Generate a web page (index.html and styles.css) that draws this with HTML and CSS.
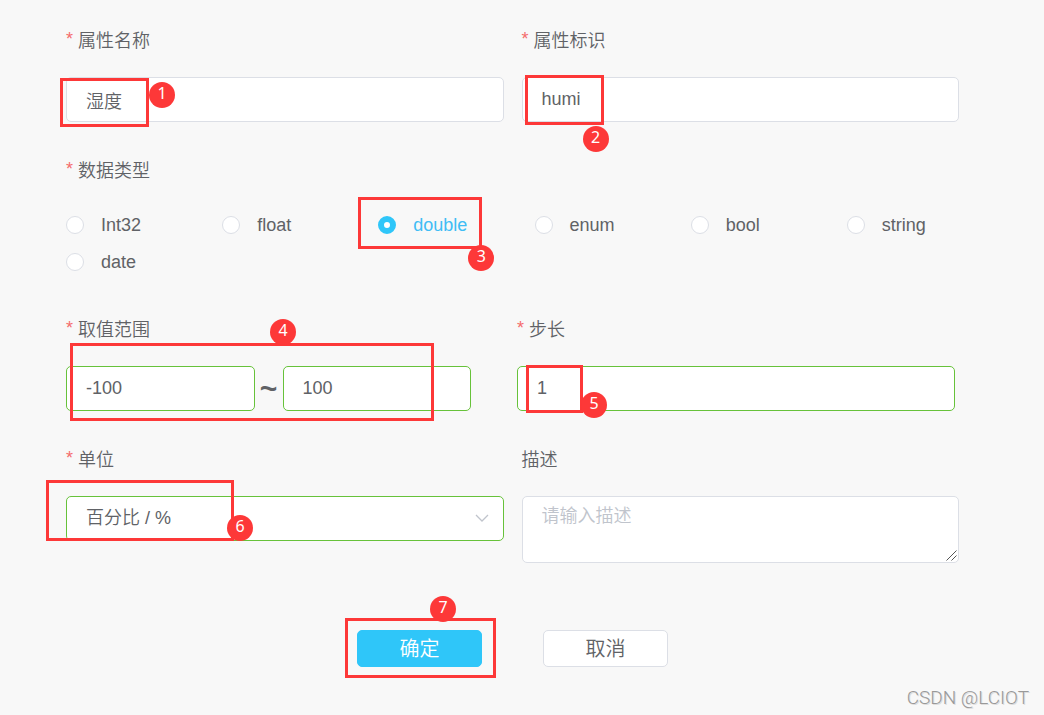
FILE: index.html
```html
<!DOCTYPE html>
<html lang="zh-CN">
<head>
    <meta charset="UTF-8">
    <title>添加属性</title>
    <link rel="stylesheet" href="styles.css">
</head>
<body>

<form class="form">
    <div class="row">
        <div class="item">
            <label class="label required" for="name">属性名称</label>
            <div class="field">
                <input class="input" id="name" type="text" value="湿度">
                <span class="frame frame-name"></span>
                <span class="badge badge-name">1</span>
            </div>
        </div>
        <div class="item">
            <label class="label required" for="key">属性标识</label>
            <div class="field">
                <input class="input" id="key" type="text" value="humi">
                <span class="frame frame-key"></span>
                <span class="badge badge-key">2</span>
            </div>
        </div>
    </div>

    <fieldset class="item types">
        <legend class="label required">数据类型</legend>
        <div class="radios">
            <label class="radio"><input type="radio" name="type">Int32</label>
            <label class="radio"><input type="radio" name="type">float</label>
            <label class="radio">
                <input type="radio" name="type" checked>double
                <span class="frame frame-type"></span>
                <span class="badge badge-type">3</span>
            </label>
            <label class="radio"><input type="radio" name="type">enum</label>
            <label class="radio"><input type="radio" name="type">bool</label>
            <label class="radio"><input type="radio" name="type">string</label>
            <label class="radio"><input type="radio" name="type">date</label>
        </div>
    </fieldset>

    <div class="row row-range">
        <div class="item">
            <label class="label required" for="min">取值范围</label>
            <div class="field range">
                <input class="input valid" id="min" type="text" value="-100">
                <span class="tilde">~</span>
                <input class="input valid" type="text" value="100" aria-label="最大值">
                <span class="frame frame-range"></span>
                <span class="badge badge-range">4</span>
            </div>
        </div>
        <div class="item">
            <label class="label required" for="step">步长</label>
            <div class="field">
                <input class="input valid" id="step" type="text" value="1">
                <span class="frame frame-step"></span>
                <span class="badge badge-step">5</span>
            </div>
        </div>
    </div>

    <div class="row">
        <div class="item">
            <label class="label required" for="unit">单位</label>
            <div class="field">
                <select class="input valid" id="unit">
                    <option>百分比 / %</option>
                </select>
                <svg class="arrow" width="14" height="8" viewBox="0 0 14 8">
                    <path d="M1 1l6 6 6-6" fill="none" stroke="#c0c4cc" stroke-width="1.3"/>
                </svg>
                <span class="frame frame-unit"></span>
                <span class="badge badge-unit">6</span>
            </div>
        </div>
        <div class="item">
            <label class="label" for="desc">描述</label>
            <div class="field">
                <textarea class="input" id="desc" placeholder="请输入描述"></textarea>
                <svg class="grip" width="11" height="11" viewBox="0 0 11 11">
                    <path d="M.5 10.5l10-10M5.5 10.5l5-5" fill="none" stroke="#555"/>
                </svg>
            </div>
        </div>
    </div>

    <div class="buttons">
        <div class="field">
            <button class="btn primary" type="button">确定</button>
            <span class="frame frame-ok"></span>
            <span class="badge badge-ok">7</span>
        </div>
        <button class="btn" type="button">取消</button>
    </div>
</form>

<footer class="watermark">CSDN @LCIOT</footer>

</body>
</html>
```
FILE: styles.css
```css
* {
    box-sizing: border-box;
}

body {
    margin: 0;
    background: #f8f8f8;
    color: #606266;
    font-family: "Liberation Sans", "Noto Sans CJK SC", sans-serif;
    font-size: 18px;
    font-weight: 350;
    line-height: 24px;
}

.form {
    padding: 29px 85px 0 66px;
}

.row {
    display: grid;
    grid-template-columns: 1fr 1fr;
    gap: 18px;
}

.row-range {
    grid-template-columns: 405fr 438fr;
    gap: 46px;
    margin-right: 4px;
}

.item {
    min-width: 0;
    margin-bottom: 37px;
}

.label {
    display: block;
    height: 24px;
    margin-bottom: 24px;
    padding: 0;
}

.required::before {
    content: "*";
    margin-right: 5px;
    color: #f56c6c;
    line-height: 1;
    vertical-align: 2px;
}

.field {
    position: relative;
}

.input {
    display: block;
    width: 100%;
    height: 45px;
    margin: 0;
    padding: 0 19px;
    border: 1px solid #dcdfe6;
    border-radius: 5px;
    outline: none;
    background: #fff;
    color: #606266;
    font: inherit;
    line-height: 43px;
    appearance: none;
}

.input.valid {
    border-color: #67c23a;
}

textarea.input {
    height: 67px;
    padding: 7px 19px;
    line-height: 24px;
    resize: vertical;
}

textarea.input::-webkit-resizer {
    background: transparent;
}

.input::placeholder {
    color: #c0c4cc;
}

/* data type */
.types {
    margin: 0 0 38px;
    padding: 0;
    border: 0;
}

.types .label {
    margin-bottom: 23px;
}

.radios {
    display: grid;
    grid-template-columns: repeat(6, 1fr);
    margin-right: -44px;
}

.radio {
    position: relative;
    display: flex;
    align-items: center;
    gap: 17px;
    height: 37px;
}

.radio input {
    width: 18px;
    height: 18px;
    margin: 0;
    border: 1px solid #dcdfe6;
    border-radius: 50%;
    background: #fff;
    appearance: none;
}

.radio input:checked {
    border: 6px solid #2fc6f9;
}

.radio:has(:checked) {
    color: #40bdf5;
}

/* range */
.range {
    display: flex;
}

.range .input {
    flex: 1;
    min-width: 0;
}

.tilde {
    width: 28px;
    font-size: 30px;
    font-weight: bold;
    line-height: 45px;
    text-align: center;
}

.arrow {
    position: absolute;
    top: 18px;
    right: 15px;
    pointer-events: none;
}

.grip {
    position: absolute;
    right: 2px;
    bottom: 2px;
    pointer-events: none;
}

/* buttons */
.buttons {
    display: flex;
    justify-content: center;
    gap: 61px;
    margin-top: 30px;
}

.btn {
    display: block;
    width: 125px;
    height: 37px;
    padding: 0;
    border: 1px solid #dcdfe6;
    border-radius: 5px;
    background: #fff;
    color: #606266;
    font: inherit;
    font-size: 20px;
}

.btn.primary {
    border-color: #2fc6f9;
    background: #2fc6f9;
    color: #fff;
}

/* numbered marks over the fields */
.frame {
    position: absolute;
    border: 3px solid #fd3838;
    pointer-events: none;
}

.badge {
    position: absolute;
    width: 26px;
    height: 26px;
    border-radius: 50%;
    background: #fd3838;
    color: #fff;
    font-family: "Noto Sans", sans-serif;
    font-size: 16px;
    font-weight: 400;
    line-height: 22px;
    text-align: center;
    pointer-events: none;
}

.frame-name {
    top: 1px;
    left: -6px;
    width: 89px;
    height: 49px;
}

.badge-name {
    top: 5px;
    left: 83px;
}

.frame-key {
    top: -2px;
    left: 3px;
    width: 79px;
    height: 50px;
}

.badge-key {
    top: 49px;
    left: 61px;
}

.frame-type {
    top: -9px;
    left: -20px;
    width: 124px;
    height: 52px;
}

.badge-type {
    top: 39px;
    left: 90px;
}

.frame-range {
    top: -23px;
    left: 4px;
    width: 364px;
    height: 78px;
}

.badge-range {
    top: -47px;
    left: 204px;
}

.frame-step {
    top: -1px;
    left: 9px;
    width: 57px;
    height: 48px;
}

.badge-step {
    top: 26px;
    left: 64px;
}

.frame-unit {
    top: -16px;
    left: -20px;
    width: 188px;
    height: 61px;
}

.badge-unit {
    top: 19px;
    left: 161px;
}

.frame-ok {
    top: -12px;
    left: -12px;
    width: 151px;
    height: 60px;
}

.badge-ok {
    top: -34px;
    left: 73px;
}

.watermark {
    margin-top: 19px;
    padding-right: 15px;
    color: #999;
    font-family: Roboto, sans-serif;
    font-size: 19px;
    text-align: right;
    text-shadow: 1px 1px 0 #ddd;
}
```
